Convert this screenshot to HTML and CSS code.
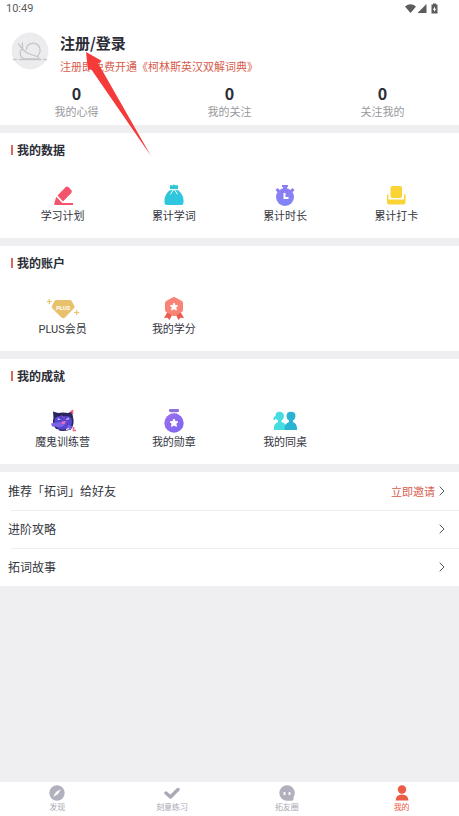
FILE: index.html
```html
<!DOCTYPE html>
<html lang="zh-CN">
<head>
<meta charset="utf-8">
<meta name="viewport" content="width=device-width, initial-scale=1">
<title>我的</title>
<link rel="stylesheet" href="styles.css">
</head>
<body>
<header class="profile">
  <div class="status">
    <span>10:49</span>
    <svg class="status-icons" width="34" height="12" viewBox="0 0 34 12" aria-hidden="true">
      <path d="M0 3.500Q5.500-1 11 3.500L5.500 10Z"/>
      <path d="M12.500 10L21.500 1V10Z"/>
      <path fill-rule="evenodd" d="M26.500 1.500h1.500V.5h3v1H32.500V10.500h-6ZM30 3.500L27.800 6.700h1.300V9L31.300 5.700H30Z"/>
    </svg>
  </div>
  <div class="user">
    <svg class="avatar" width="38" height="38" viewBox="0 0 38 38" aria-hidden="true">
      <circle cx="19" cy="19" r="18.500" fill="#ececef"/>
      <g fill="none" stroke="#c5c5ca" stroke-width="1.300" stroke-linecap="round" stroke-linejoin="round">
        <path d="M7.500 12L11.500 17M11.500 11V17C7.500 20 9 26.500 14.500 27H27Q29 26 26.500 24.500"/>
        <path d="M11.500 17Q14 20 17.500 21.500T26 24.500C30 21.500 30 16 27 13C22.500 9 15.500 12 15.500 17.500"/>
        <path d="M2.500 27.500h3M8 27.500h22M32.500 27.500h3"/>
      </g>
    </svg>
    <div>
      <a class="login" href="#login">注册/登录</a>
      <p class="promo">注册即免费开通《柯林斯英汉双解词典》</p>
    </div>
  </div>
  <div class="stats">
    <a href="#notes"><b>0</b><span>我的心得</span></a>
    <a href="#following"><b>0</b><span>我的关注</span></a>
    <a href="#followers"><b>0</b><span>关注我的</span></a>
  </div>
  <svg class="pointer" width="66" height="106" viewBox="0 0 66 106" aria-hidden="true">
    <path d="M0 0L16 9L12 11L65 104L5 17L2 18Z" fill="#f53a3a"/>
  </svg>
</header>

<main>
  <section class="card">
    <h2>我的数据</h2>
    <div class="grid">
      <a href="#plan">
        <svg width="34" height="26" viewBox="0 1 34 26" aria-hidden="true">
          <g fill="#f4556d"><path d="M11.500 13.500L19.500 5.200Q21 4 22.500 5.300L25.300 8Q26.500 9.500 25.300 11L17 19.500Z"/><path d="M10.200 14.800L15.800 20.500L16 21H27V23H9Q8 23 8.300 21.500Z"/></g>
        </svg>
        <span>学习计划</span></a>
      <a href="#words">
        <svg width="34" height="26" viewBox="0 1 34 26" aria-hidden="true">
          <defs><linearGradient id="bag" x2="1" y2="1"><stop stop-color="#2bc8cf"/><stop offset="1" stop-color="#30c5e7"/></linearGradient></defs>
          <path fill="url(#bag)" d="M13 3L15 3.500L17 2.500L19 3.500L21 3V7.500H13ZM13 8H21C24 10.500 26.500 14 26.500 18V20.500Q26.500 23 24 23H10Q7.500 23 7.500 20.500V18C7.500 14 10 10.500 13 8Z"/>
          <path fill="none" stroke="#fff" stroke-linecap="round" d="M12.500 7.700H21.500M16 8.500L13.700 12M18 8.500L20.300 12"/>
        </svg>
        <span>累计学词</span></a>
      <a href="#time">
        <svg width="34" height="26" viewBox="0 1 34 26" aria-hidden="true">
          <defs><linearGradient id="watch" x2="0" y2="1"><stop stop-color="#947af0"/><stop offset="1" stop-color="#7d86fa"/></linearGradient></defs>
          <g fill="url(#watch)"><circle cx="17" cy="15" r="9"/><path d="M14 3h6v2h-1v3h-4V5h-1Z"/><path d="M7.500 8l2-2l3.500 3l-2 3ZM26.500 8l-2-2l-3.500 3l2 3Z"/></g>
          <path d="M16.500 11V16H20.500" fill="none" stroke="#fff" stroke-width="2"/>
        </svg>
        <span>累计时长</span></a>
      <a href="#checkin">
        <svg width="34" height="26" viewBox="0 1 34 26" aria-hidden="true">
          <g fill="#fbd334"><rect x="11.500" y="4" width="11.500" height="12" rx="2"/><path d="M9.500 12V17.500H25V12Q26.500 12 26.500 13.500V20.500Q26.500 22.500 24.500 22.500H10Q8 22.500 8 20.500V13.500Q8 12 9.500 12Z"/></g>
        </svg>
        <span>累计打卡</span></a>
    </div>
  </section>

  <section class="card">
    <h2>我的账户</h2>
    <div class="grid">
      <a href="#plus">
        <svg width="34" height="26" viewBox="0 0 34 26" aria-hidden="true">
          <path fill="#e9c16d" d="M10 4H24Q25 4 25.600 5L28.500 10Q29 11 28.200 12L19 21.500Q17.300 23 15.500 21.500L6 12Q5.200 11 6 10L8.500 5Q9 4 10 4Z"/>
          <path stroke="#e9c16d" stroke-width="1.200" d="M3.300 3V8M.8 5.500H5.800M30.700 14V19M28.200 16.500H33.200"/>
          <text class="gem-text" x="17" y="13.500" text-anchor="middle">PLUS</text>
        </svg>
        <span>PLUS会员</span></a>
      <a href="#credits">
        <svg width="34" height="26" viewBox="0 0 34 26" aria-hidden="true">
          <path fill="#e95c50" d="M10.500 16L7 22l3.500-.3L12.500 24L15.500 18ZM23.500 16L27 22l-3.500-.3L21.500 24L18.500 18Z"/>
          <path fill="#f98374" d="M15.500 1.500Q17 .7 18.500 1.500L24.500 4.700Q26 5.500 26 7V14Q26 15.500 24.500 16.300L18.500 19.700Q17 20.500 15.500 19.700L9.500 16.300Q8 15.500 8 14V7Q8 5.500 9.500 4.700Z"/>
          <path fill="#fff" stroke="#fff" stroke-linejoin="round" d="M17 7l1.100 2.400l2.600.3l-1.900 1.800l.5 2.600L17 12.800l-2.300 1.300l.5-2.600l-1.900-1.800l2.600-.3Z"/>
        </svg>
        <span>我的学分</span></a>
    </div>
  </section>

  <section class="card">
    <h2>我的成就</h2>
    <div class="grid">
      <a href="#camp">
        <svg width="34" height="26" viewBox="0 0 34 26" aria-hidden="true">
          <path fill="#29255f" d="M7 2.500L12 4Q17 3 22 4L26 2.500L27 8Q28.500 14 26 19Q23 22 17 22T8.500 18Q6 13 7.500 9Z"/>
          <path fill="#5745cf" d="M9 9Q13 5.500 17 8Q22 5.500 25.500 9.500Q27 14 24 18Q19 22 13 20Q8 17 8.500 12Z"/>
          <path fill="#7b62e8" d="M5 14.500l5-1l5-.5l4 3l-4 2l-9-.5ZM22 16l4 1l-1 4h-5Z"/>
          <path fill="#e9dcff" d="M11.500 9l3.500 1.500l-3 .5ZM23 8.500l-3.500 2l3 .3Z"/>
          <path d="M15 6.500L19 9" stroke="#9a55d6"/>
          <path fill="#ee6fba" d="M16 12.500l4-.5l-1.500 3.500l-3-1Z"/>
          <path fill="none" stroke="#f0647f" stroke-width="1.600" d="M24.500 3l2-1.200v3.500M27.500 18v3.500h2.500"/>
          <path d="M10 20.500l3 .5M20 20.500l3-1" stroke="#f5f1ff"/>
        </svg>
        <span>魔鬼训练营</span></a>
      <a href="#medals">
        <svg width="34" height="26" viewBox="0 0 34 26" aria-hidden="true">
          <defs><linearGradient id="medal" x2="1" y2="1"><stop stop-color="#a06eea"/><stop offset="1" stop-color="#7866f5"/></linearGradient></defs>
          <rect x="12" y="0" width="10" height="3" rx="1" fill="#8e70d8"/><path d="M13.500 4h7" stroke="#c5b7ed"/>
          <circle cx="17" cy="14" r="9.700" fill="url(#medal)"/>
          <path fill="#fff" stroke="#fff" stroke-linejoin="round" d="M17 10l1.200 2.500l2.700.3l-2 1.900l.5 2.700L17 16l-2.400 1.400l.5-2.700l-2-1.900l2.700-.3Z"/>
        </svg>
        <span>我的勋章</span></a>
      <a href="#partner">
        <svg width="34" height="26" viewBox="0 0 34 26" aria-hidden="true">
          <path fill="#45dce2" d="M7.500 7Q7.500 2.800 11.500 2.800T16 7Q16 10 13.500 11.500V13Q19 14.500 19 21H6Q5 15 10 13V11.500Q8.500 11 8 9.500L6 11.500Q4.500 9.500 6 8Z"/>
          <path fill="#29b4d4" d="M18.500 7.200Q18.500 2.800 23 2.800T27.500 7.200Q27.500 10 25 11.500V13Q29 14.500 29 20V21H16.500Q16 15 21 13V11.500Q18.500 10 18.500 7.200Z"/>
        </svg>
        <span>我的同桌</span></a>
    </div>
  </section>

  <nav class="links" aria-label="更多">
    <a href="#invite"><span>推荐「拓词」给好友</span><em>立即邀请</em><svg width="6" height="10" viewBox="0 0 6 10" aria-hidden="true"><path d="M.7.7L5 5L.7 9.300"/></svg></a>
    <a href="#guide"><span>进阶攻略</span><svg width="6" height="10" viewBox="0 0 6 10" aria-hidden="true"><path d="M.7.7L5 5L.7 9.300"/></svg></a>
    <a href="#story"><span>拓词故事</span><svg width="6" height="10" viewBox="0 0 6 10" aria-hidden="true"><path d="M.7.7L5 5L.7 9.300"/></svg></a>
  </nav>
</main>

<nav class="tabs" aria-label="主导航">
  <a href="#discover">
    <svg width="16" height="16" viewBox="0 0 16 16" aria-hidden="true"><circle cx="8" cy="8" r="7.700" fill="#b1b1bd"/><path d="M12 4L9 9L4 12L7 7Z" fill="#fff"/></svg>
    <span>发现</span></a>
  <a href="#practice">
    <svg width="16" height="16" viewBox="0 0 16 16" aria-hidden="true"><path d="M2 8L6.500 12L14 4.500" fill="none" stroke="#a9a9b6" stroke-width="3.400" stroke-linecap="round" stroke-linejoin="round"/></svg>
    <span>刻意练习</span></a>
  <a href="#circle">
    <svg width="16" height="16" viewBox="0 0 16 16" aria-hidden="true"><path d="M8 .3a7.700 7.700 0 1 0 0 15.400h5q2 0 1.500-3.500A7.700 7.700 0 0 0 8 .3Z" fill="#b1b1bd"/><path d="M5.500 7v3M10.500 7v3" stroke="#fff" stroke-width="1.800"/></svg>
    <span>拓友圈</span></a>
  <a class="active" href="#me" aria-current="page">
    <svg width="16" height="16" viewBox="0 0 16 16" aria-hidden="true"><g fill="#ec5b43"><circle cx="8" cy="4.500" r="4.200"/><path d="M1.500 15.500Q2 9.500 8 9.500T14.500 15.500Z"/></g></svg>
    <span>我的</span></a>
</nav>
</body>
</html>
```
FILE: styles.css
```css
* {
  box-sizing: border-box;
}

body {
  margin: 0;
  min-height: 100vh;
  display: flex;
  flex-direction: column;
  background: #efeff1;
  color: #34363e;
  font: 11px/16px "Noto Sans CJK SC", sans-serif;
}

a {
  color: inherit;
  text-decoration: none;
}

svg {
  display: block;
}

.profile {
  position: relative;
  background: #fff;
  padding-bottom: 6px;
}

.status {
  display: flex;
  justify-content: space-between;
  align-items: center;
  height: 18px;
  padding: 0 20px 0 6px;
  color: #5c5c5c;
  font-family: Roboto, sans-serif;
}

.status-icons {
  fill: #5c5c5c;
}

.user {
  display: flex;
  gap: 11px;
  padding: 14px 11px 0;
}

.login {
  display: block;
  font-size: 15px;
  font-weight: 700;
  line-height: 22px;
  color: #2b2d36;
}

.promo {
  margin: 4px 0 0;
  line-height: 16px;
  color: #d75c4d;
}

.stats {
  display: grid;
  grid-template-columns: repeat(3, 1fr);
  padding-top: 9px;
  text-align: center;
  color: #97989d;
}

.stats b {
  display: block;
  font-size: 16px;
  line-height: 20px;
  color: #2b2d36;
}

.stats span {
  display: block;
}

.pointer {
  position: absolute;
  left: 86px;
  top: 52px;
}

main {
  flex: 1;
}

.card {
  margin-top: 8px;
  padding: 8px 7px 14px;
  background: #fff;
}

.card h2 {
  display: flex;
  align-items: center;
  gap: 4px;
  margin: 0 0 24px;
  padding-left: 4px;
  font-size: 12px;
  line-height: 18px;
  color: #2b2d36;
}

.card h2::before {
  content: "";
  width: 2px;
  height: 10px;
  background: #d9695b;
}

.grid {
  display: grid;
  grid-template-columns: repeat(4, 1fr);
}

.grid a {
  display: flex;
  flex-direction: column;
  align-items: center;
  gap: 1px;
  line-height: 14px;
}

.grid span {
  font-family: Roboto, "Noto Sans CJK SC", sans-serif;
}

.gem-text {
  font: italic 700 6px Roboto, sans-serif;
  fill: #fff;
}

.links {
  margin-top: 8px;
  background: #fff;
}

.links a {
  display: flex;
  align-items: center;
  gap: 4px;
  height: 38px;
  padding: 0 14px 0 8px;
  font-size: 12px;
}

.links a + a {
  background: linear-gradient(#ededef, #ededef) 11px 0 / 100% 1px no-repeat;
}

.links span {
  flex: 1;
}

.links em {
  font-size: 11px;
  font-style: normal;
  color: #d75c4d;
}

.links path {
  fill: none;
  stroke: #55565c;
}

.tabs {
  position: sticky;
  bottom: 0;
  display: grid;
  grid-template-columns: repeat(4, 1fr);
  padding: 3px 0;
  background: #fff;
  color: #a9a9b4;
  font-size: 8px;
  line-height: 12px;
}

.tabs a {
  display: flex;
  flex-direction: column;
  align-items: center;
}

.tabs .active {
  color: #ec5b43;
}
```
